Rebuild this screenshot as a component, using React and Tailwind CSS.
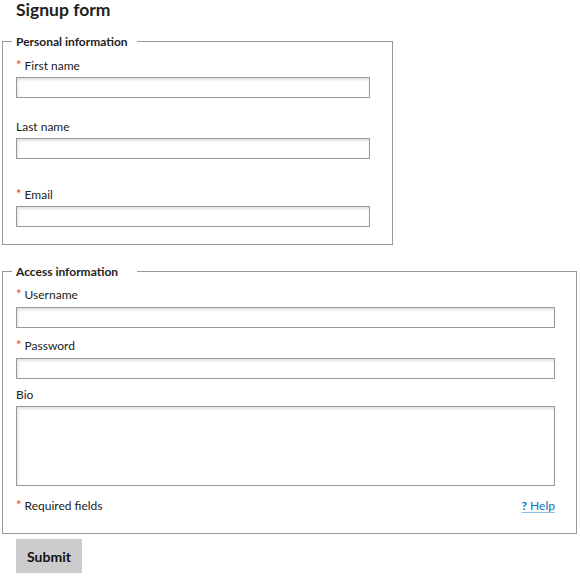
import React from "react";

const inputCls =
  "block w-full h-[21px] border border-[#999] bg-white shadow-[inset_1px_2px_3px_rgba(0,0,0,0.13)] outline-none";

const Req = () => <span className="mr-[3px] text-[13px] text-[#e2462f]">*</span>;

const Label = ({ req, children, className = "" }) => (
  <label className={"block text-[12px] leading-[15px] text-[#222] " + className}>
    {req && <Req />}
    {children}
  </label>
);

export default function App() {
  return (
    <div className="font-['Lato',sans-serif] text-[#222] bg-white min-h-[580px]">
      <h1 className="pl-4 text-[17.5px] leading-[20px] font-bold">Signup form</h1>

      <form onSubmit={(e) => e.preventDefault()}>
        {/* Personal information */}
        <fieldset className="ml-[2px] mt-[14px] w-[391px] border border-[#999] pl-[13px] pr-[22px] pt-[9px] pb-[17px]">
          <legend className="-ml-[4px] w-[125px] pl-1 text-[12px] leading-[15px] font-bold">
            Personal information
          </legend>
          <Label req className="mb-1">First name</Label>
          <input type="text" className={inputCls} />

          <Label className="mt-[21px] mb-1">Last name</Label>
          <input type="text" className={inputCls} />

          <Label req className="mt-[28px] mb-1">Email</Label>
          <input type="text" className={inputCls} />
        </fieldset>

        {/* Access information */}
        <fieldset className="ml-[2px] mt-[19px] w-[575px] border border-[#999] pl-[13px] pr-[21px] pt-[8px] pb-[20px]">
          <legend className="-ml-[4px] w-[125px] pl-1 text-[12px] leading-[15px] font-bold">
            Access information
          </legend>
          <Label req className="mb-[5px]">Username</Label>
          <input type="text" className={inputCls} />

          <Label req className="mt-[10px] mb-[5px]">Password</Label>
          <input type="password" className={inputCls} />

          <Label className="mt-2 mb-1">Bio</Label>
          <textarea className="block w-full h-[80px] resize-none border border-[#999] bg-white shadow-[inset_1px_2px_3px_rgba(0,0,0,0.13)] outline-none" />

          <div className="mt-3 flex items-center justify-between text-[12px] leading-[15px]">
            <span>
              <Req />
              Required fields
            </span>
            <a href="#" className="text-[#0a70c0] underline decoration-[#8fbde3] underline-offset-2">
              <span className="font-bold">?</span> Help
            </a>
          </div>
        </fieldset>

        <button
          type="submit"
          className="ml-4 mt-[5px] h-[34px] w-[66px] bg-[#ccc] text-[14px] font-bold text-[#111]"
        >
          Submit
        </button>
      </form>
    </div>
  );
}
